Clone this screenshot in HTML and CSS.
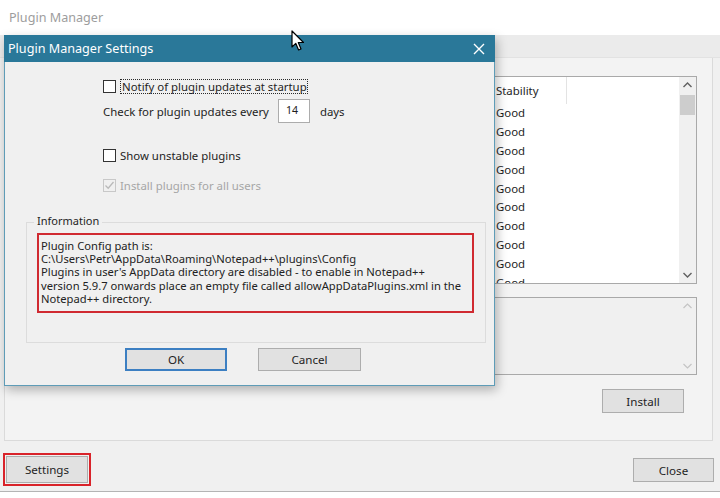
FILE: index.html
```html
<!DOCTYPE html>
<html>
<head>
<meta charset="utf-8">
<link rel="stylesheet" href="styles.css">
</head>
<body>
<div class="app">
  <div class="app-title">Plugin Manager</div>
  <div class="client">
    <div class="tabstrip"></div>
    <div class="panel">
      <div class="list">
        <div class="list-body">
          <div class="list-head">
            <div class="col col-name"></div>
            <div class="col col-stab">Stability</div>
            <div class="col col-rest"></div>
          </div>
          <div class="rows">
            <div class="row"><span class="cell-name"></span><span class="cell-stab">Good</span></div>
            <div class="row"><span class="cell-name"></span><span class="cell-stab">Good</span></div>
            <div class="row"><span class="cell-name"></span><span class="cell-stab">Good</span></div>
            <div class="row"><span class="cell-name"></span><span class="cell-stab">Good</span></div>
            <div class="row"><span class="cell-name"></span><span class="cell-stab">Good</span></div>
            <div class="row"><span class="cell-name"></span><span class="cell-stab">Good</span></div>
            <div class="row"><span class="cell-name"></span><span class="cell-stab">Good</span></div>
            <div class="row"><span class="cell-name"></span><span class="cell-stab">Good</span></div>
            <div class="row"><span class="cell-name"></span><span class="cell-stab">Good</span></div>
            <div class="row"><span class="cell-name"></span><span class="cell-stab">Good</span></div>
          </div>
        </div>
        <div class="vscroll">
          <svg class="arrow" width="17" height="17" viewBox="0 0 17 17"><path d="M4.5 10 L8.5 6 L12.5 10" fill="none" stroke="#606060" stroke-width="1.4"/></svg>
          <div class="thumb"></div>
          <div class="track"></div>
          <svg class="arrow" width="17" height="17" viewBox="0 0 17 17"><path d="M4.5 7 L8.5 11 L12.5 7" fill="none" stroke="#606060" stroke-width="1.4"/></svg>
        </div>
      </div>
      <div class="desc">
        <div class="desc-body"></div>
        <div class="vscroll faint">
          <svg class="arrow" width="17" height="17" viewBox="0 0 17 17"><path d="M4.5 10 L8.5 6 L12.5 10" fill="none" stroke="#c4c4c4" stroke-width="1.2"/></svg>
          <div class="track"></div>
          <svg class="arrow" width="17" height="17" viewBox="0 0 17 17"><path d="M4.5 7 L8.5 11 L12.5 7" fill="none" stroke="#c4c4c4" stroke-width="1.2"/></svg>
        </div>
      </div>
      <div class="install-row"><button class="btn btn-install">Install</button></div>
    </div>
    <div class="footer">
      <div class="highlight"><button class="btn btn-settings">Settings</button></div>
      <button class="btn btn-close">Close</button>
    </div>
  </div>

  <div class="dialog">
    <div class="dlg-title">
      <span>Plugin Manager Settings</span>
      <svg class="dlg-x" width="12" height="12" viewBox="0 0 12 12"><path d="M1 1 L11 11 M11 1 L1 11" stroke="#ffffff" stroke-width="1.4"/></svg>
    </div>
    <div class="dlg-body">
      <div class="options">
        <div class="opt opt-notify">
          <span class="cb"></span>
          <span class="focus">Notify of plugin updates at startup</span>
        </div>
        <div class="opt opt-every">
          <span>Check for plugin updates every</span>
          <span class="num">14</span>
          <span class="days">days</span>
        </div>
        <div class="opt opt-unstable">
          <span class="cb"></span>
          <span>Show unstable plugins</span>
        </div>
        <div class="opt opt-all disabled">
          <span class="cb cb-dis"><svg width="11" height="11" viewBox="0 0 11 11"><path d="M1.5 5.5 L4.2 8.2 L9.5 2" fill="none" stroke="#b9b9b9" stroke-width="1.3"/></svg></span>
          <span>Install plugins for all users</span>
        </div>
      </div>
      <div class="group">
        <div class="group-label">Information</div>
        <div class="info">
          <div class="line">Plugin Config path is:</div>
          <div class="line">C:\Users\Petr\AppData\Roaming\Notepad++\plugins\Config</div>
          <div class="line">Plugins in user's AppData directory are disabled - to enable in Notepad++</div>
          <div class="line">version 5.9.7 onwards place an empty file called allowAppDataPlugins.xml in the</div>
          <div class="line">Notepad++ directory.</div>
        </div>
      </div>
      <div class="dlg-buttons">
        <button class="btn btn-ok">OK</button>
        <button class="btn btn-cancel">Cancel</button>
      </div>
    </div>
  </div>

  <svg class="cursor" width="14" height="22" viewBox="0 0 14 22"><path d="M1 1 L1 17 L4.8 13.4 L7.6 20 L10 19 L7.3 12.5 L12.5 12.5 Z" fill="#ffffff" stroke="#000000" stroke-width="1.2" stroke-linejoin="round"/></svg>
</div>
</body>
</html>
```

FILE: styles.css
```css
* { box-sizing: border-box; }
html, body { margin: 0; padding: 0; }
body {
  width: 720px;
  height: 498px;
  overflow: hidden;
  background: #ffffff;
  font-family: "Noto Sans", "Open Sans", "DejaVu Sans", sans-serif;
  font-size: 11.4px;
  color: #1e1e1e;
}
.app {
  position: relative;
  width: 720px;
  height: 498px;
}
.app-title {
  height: 35px;
  padding: 9px 0 0 9px;
  font-size: 12.6px;
  color: #9d9d9d;
  background: #ffffff;
}
.client {
  background: #f0f0f0;
  height: 457px;
  border-bottom: 1px solid #b4b4b4;
  display: flex;
  flex-direction: column;
}
.tabstrip {
  height: 23px;
  background: #ebebeb;
  border-bottom: 1px solid #e2e2e2;
}
.panel {
  margin: 0 7px 0 4px;
  height: 383px;
  background: #f3f3f3;
  border: 1px solid #dadada;
  border-top: none;
  display: flex;
  flex-direction: column;
  padding: 18px 15px 0 8px;
}
.list {
  height: 208px;
  border: 1px solid #a9a9a9;
  background: #ffffff;
  display: flex;
}
.list-body {
  flex: 1;
  overflow: hidden;
}
.list-head {
  display: flex;
  height: 27px;
  align-items: center;
}
.col { height: 100%; display: flex; align-items: center; }
.col-name { width: 481px; border-right: 1px solid #e3e3e3; }
.col-stab { width: 72px; padding-left: 1px; border-right: 1px solid #e3e3e3; }
.col-rest { flex: 1; }
.row {
  display: flex;
  height: 18.9px;
  line-height: 18.9px;
}
.cell-name { width: 481px; }
.cell-stab { padding-left: 1px; }
.vscroll {
  width: 17px;
  display: flex;
  flex-direction: column;
  background: #f0f0f0;
}
.arrow { display: block; flex: none; }
.thumb {
  height: 20px;
  background: #cdcdcd;
  margin: 1px 1px 0 1px;
}
.track { flex: 1; }
.desc {
  margin-top: 13px;
  height: 78px;
  border: 1px solid #a9a9a9;
  background: #f0f0f0;
  display: flex;
}
.desc-body { flex: 1; }
.install-row {
  display: flex;
  justify-content: flex-end;
  margin-top: 14px;
  padding-right: 13px;
}
.btn {
  font-family: inherit;
  font-size: 11.6px;
  color: #1e1e1e;
  background: #e1e1e1;
  border: 1px solid #adadad;
  padding: 0;
  margin: 0;
}
.btn-install { width: 82px; height: 24px; }
.footer {
  flex: 1;
  display: flex;
  justify-content: space-between;
  align-items: flex-start;
  padding: 0 6px 0 3px;
}
.highlight {
  border: 2px solid #d9232a;
  padding: 1px;
  margin-top: 12px;
}
.btn-settings { width: 82px; height: 27px; display: block; }
.btn-close { width: 81px; height: 24px; margin-top: 17px; }

/* dialog */
.dialog {
  position: absolute;
  left: 4px;
  top: 35px;
  width: 491px;
  height: 351px;
  background: #f0f0f0;
  border: 1px solid #5e9cb7;
  border-top: none;
  box-shadow: 2px 4px 10px rgba(0,0,0,0.28);
  display: flex;
  flex-direction: column;
}
.dlg-title {
  height: 27px;
  background: #2a7899;
  color: #ffffff;
  font-size: 12.6px;
  display: flex;
  align-items: center;
  justify-content: space-between;
  padding: 0 10px 0 4px;
  margin: 0 -1px;
}
.dlg-x { display: block; }
.dlg-body {
  flex: 1;
  display: flex;
  flex-direction: column;
}
.options {
  padding: 17px 0 0 98px;
  display: flex;
  flex-direction: column;
}
.opt {
  display: flex;
  align-items: center;
}
.cb {
  width: 13px;
  height: 13px;
  border: 1px solid #333333;
  background: #ffffff;
  margin-right: 4px;
  display: inline-flex;
  align-items: center;
  justify-content: center;
  flex: none;
}
.cb-dis { border-color: #c8c8c8; background: #f0f0f0; }
.focus {
  border: 1px dotted #2a2a2a;
  padding: 0 0 0 1px;
  line-height: 13px;
}
.opt-notify { height: 14px; }
.opt-every { margin-top: 6px; height: 24px; }
.num {
  width: 32px;
  height: 24px;
  border: 1px solid #acacac;
  background: #ffffff;
  margin-left: 9px;
  padding: 3px 0 0 7px;
  font-size: 10.6px;
}
.days { margin-left: 10px; }
.opt-unstable { margin-top: 25px; height: 14px; }
.opt-all { margin-top: 16px; height: 14px; }
.disabled { color: #a6a6a6; }
.group {
  margin: 30px 8px 0 21px;
  height: 121px;
  border: 1px solid #dcdcdc;
  position: relative;
  padding: 10px 10px 0 10px;
}
.group-label {
  position: absolute;
  left: 7px;
  top: -9px;
  background: #f0f0f0;
  padding: 0 3px;
  font-size: 11px;
  line-height: 14px;
}
.info {
  border: 2px solid #d02a31;
  height: 80px;
  padding: 4px 0 0 2px;
  font-size: 11.2px;
  color: #222222;
  white-space: nowrap;
  margin-right: 1px;
}
.line {
  height: 13.2px;
  line-height: 13.2px;
}
.dlg-buttons {
  display: flex;
  padding: 5px 0 0 120px;
  gap: 31px;
}
.btn-ok {
  width: 102px;
  height: 23px;
  border: 2px solid #3c7fc2;
  background: #e1e1e1;
}
.btn-cancel { width: 103px; height: 23px; }

.cursor {
  position: absolute;
  left: 291px;
  top: 30px;
}
```
